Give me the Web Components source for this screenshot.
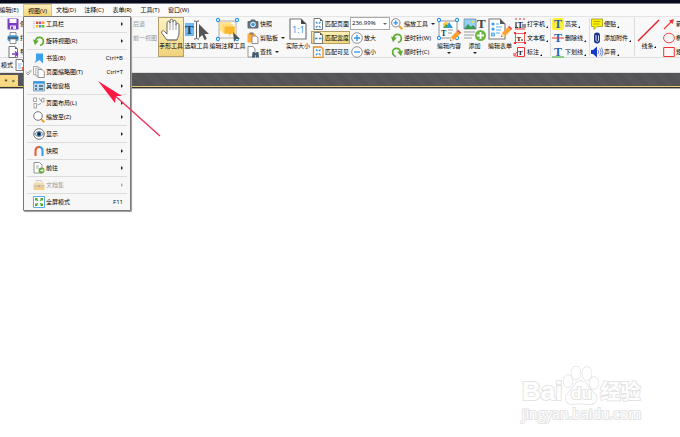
<!DOCTYPE html>
<html lang="zh-CN">
<head>
<meta charset="utf-8">
<title>PDF 编辑器</title>
<style>
html,body{margin:0;height:100%;background:#fff}
body{font:6px/12px "Open Sans","Noto Sans CJK SC",sans-serif;color:#000;overflow:hidden}
</style>
</head>
<body>
<pdf-app></pdf-app>
<script>
const T = (x, y, s, c = '#234') => `<text x="${x}" y="${y}" font-family="Liberation Serif" font-weight="700" font-size="${s}" fill="${c}">T</text>`;
const handles = (w, h) => [[2,2],[w-2,2],[2,h-2],[w-2,h-2]].map(([x,y]) => `<circle cx="${x}" cy="${y}" r="1.6" fill="#fff" stroke="#2196f3" stroke-width="1.1"/>`).join('');
const pencil = (x, y, s = 1) => `<g transform="translate(${x} ${y}) scale(${s})"><path d="M0 11l1-4 6-6 3 3-6 6z" fill="#ff9f2e"/><path d="M7 1l1.200-1.200 3 3L10 4z" fill="#e8453c"/><path d="M0 11l1-4 3 3z" fill="#ffe0b0"/><path d="M0 11l.4-1.600 1.200 1.200z" fill="#444"/></g>`;
const page = `<path d="M2 .5h6L10.500 3v8.500H2z" fill="#fff" stroke="#777"/><path d="M8 .5V3h2.500z" fill="#555"/>`;
const ICONS = {
  save: [12,12,`<path d="M.5.500h10l1 1v10H.5z" fill="#7a3fc0"/><path d="M2.500 1h7v4h-7z" fill="#fff"/><path d="M3 7.500h6V11H3z" fill="#e8ddf6"/><path d="M4 8.500h2V11H4z" fill="#7a3fc0"/>`],
  print: [12,12,`<path d="M3 .5h6V4H3z" fill="#fff" stroke="#777" stroke-width=".8"/><rect x=".5" y="3.500" width="11" height="5.500" rx="1.500" fill="#3c9be0"/><path d="M1 6h10" stroke="#456" stroke-width="1.500"/><path d="M3 7h6v4.500H3z" fill="#fff" stroke="#777" stroke-width=".8"/>`],
  export: [12,12,`${page}<path d="M5 8h5M8 5.500L10.700 8 8 10.500" fill="none" stroke="#7a3fc0" stroke-width="1.400"/>`],
  doc: [12,12,`${page}<path d="M4 5h4M4 7h3M4 9h4" stroke="#8bc2ec"/><path d="M8 8h4v3H8z" fill="#ed6548"/>`],
  hand: [22,24,`<path d="M7 22L2 15.500c-1.400-2 1-3.800 2.600-2L7 16V5c0-2.300 3-2.300 3 0V3c0-2.400 3-2.400 3 0v1c0-2.300 3-2.300 3 0v3c0-2.200 3-2.200 3 0v8c0 4-2 5-2 7z" fill="#fff" stroke="#555" stroke-width=".9"/><path d="M10 5v7M13 4v8M16 7v5M7 22h10" stroke="#777" stroke-width=".7"/>`],
  select: [24,24,`<path d="M0 5h9v13H0z" fill="#6cb9f5"/>${T(0,16,13,'#28465d')}<path d="M9 3h1.500l1 1 1-1H14M11.500 4v16M9 21h1.500l1-1 1 1H14" fill="none" stroke="#444" stroke-width=".9"/><path d="M14 6v14l3.200-3 2.300 5 2.300-1-2.300-5H24z" fill="#555"/>`],
  annot: [24,24,`<path d="M3 3h17v17H3z" fill="none" stroke="#999" stroke-width=".8"/><path d="M4 4h11v9H4z" fill="#ffe08a"/><path d="M6 6h11v9H6z" fill="#ffd05a" stroke="#fff3c4" stroke-width=".6"/><path d="M8 8h11v8h-4l-2 3v-3H8z" fill="#f9b82c" stroke="#fff3c4" stroke-width=".6"/><g>${handles(23,23)}</g><path d="M17 14l1 10 2-3 4 0z" fill="#555"/>`],
  camera: [12,12,`<rect x=".5" y="3" width="11" height="7.500" rx="1" fill="#626c75"/><path d="M4 1.500h4l1 2H3z" fill="#626c75"/><circle cx="6" cy="6.500" r="2.800" fill="#d8effe"/><circle cx="6" cy="6.500" r="1.700" fill="#3498db"/>`],
  paste: [12,12,`<rect x=".5" y="1.500" width="8" height="9" rx="1" fill="#ffaa3d"/><path d="M2.500.500h4v2h-4z" fill="#777"/><path d="M5 4h4l2 2v5.500H5z" fill="#fff" stroke="#777" stroke-width=".8"/>`],
  find: [12,12,`<path d="M1 .5h5L8 3v8H1z" fill="#fff" stroke="#888" stroke-width=".9"/><path d="M5.500 6h2l.5 1h1l.5-1h2l.5 5.500H9V9h-.8v2.500H5z" fill="#435d73"/>`],
  actual: [18,22,`<path d="M1 1h11l5 5v15H1z" fill="#fff" stroke="#777" stroke-width="1.200"/><path d="M12 1v5h5z" fill="#444"/><text x="3" y="14.500" font-family="Open Sans" font-size="9" fill="#1c8ee8">1:1</text>`],
  fitpage: [12,12,`${page}<path d="M4 4l1.500 1.500M8.500 4L7 5.500M4 9.500L5.500 8M8.500 9.500L7 8" stroke="#1c8ee8" stroke-width="1.200"/>`],
  fitwidth: [12,12,`${page}<path d="M3 6.500h2.500M7 6.500h2.500" stroke="#1c8ee8" stroke-width="1.700"/>`],
  fitvisible: [12,12,`<path d="M1.500 1h7.500l2 2v8.500H1.500z" fill="#fff" stroke="#e78b27" stroke-width="1.300"/><path d="M4 3.500L5.500 5M8.500 3.500L7 5M4 9l1.500-1.500M8.500 9L7 7.500" stroke="#1c8ee8" stroke-width="1.200"/>`],
  plus: [12,12,`<circle cx="6" cy="6" r="5.300" fill="#fff" stroke="#777" stroke-width=".8"/><path d="M3 6h6M6 3v6" stroke="#2196f3" stroke-width="1.300"/>`],
  minus: [12,12,`<circle cx="6" cy="6" r="5.300" fill="#fff" stroke="#777" stroke-width=".8"/><path d="M3 6h6" stroke="#2196f3" stroke-width="1.300"/>`],
  zoomtool: [12,12,`<path d="M8 8l3.300 3.300" stroke="#f9a11b" stroke-width="2"/><circle cx="4.800" cy="4.800" r="4.200" fill="#fff" stroke="#778" stroke-width=".9"/><path d="M2.500 4.800h4.600M4.800 2.500v4.600" stroke="#2196f3" stroke-width="1.200"/>`],
  zoom: [12,12,`<path d="M8 8l3.300 3.300" stroke="#f9a11b" stroke-width="2"/><circle cx="5" cy="5" r="4.300" fill="#fff" stroke="#667" stroke-width=".9"/>`],
  ccw: [12,12,`<path d="M2.600 6.500C2.800 1 10.500.800 10.400 6.500 10.300 8.500 9 10 7 10.500" fill="none" stroke="#62ae35" stroke-width="1.700"/><path d="M0 4.500l5.800 1.300-3.800 4.400z" fill="#62ae35"/>`],
  cw: [12,12,`<path d="M9.400 6.500C9.200 1 1.500.800 1.600 6.500 1.700 8.500 3 10 5 10.500" fill="none" stroke="#62ae35" stroke-width="1.700"/><path d="M12 4.500L6.200 5.800l3.800 4.400z" fill="#62ae35"/>`],
  editcontent: [24,24,`<path d="M2 3h18v17H2z" fill="#fff" stroke="#888" stroke-width=".9"/><circle cx="9" cy="7" r="3" fill="#ffc93c"/><path d="M6 10l3-4 4 4z" fill="#52a84b"/><path d="M12 4l4 6H9z" fill="#2f9ae0"/>${T(4,18,8)}<path d="M11 12h5M11 15h4" stroke="#999"/>${handles(22,22)}${pencil(13,12)}`],
  add: [24,24,`<path d="M1 1h12v10H1z" fill="#8fd1f7" stroke="#789" stroke-width=".8"/><path d="M1 11l4-5 3 3 2-2 3 3v1z" fill="#3f9851"/><circle cx="10" cy="4" r="1.300" fill="#ffd84d"/>${T(14,10,13,'#444')}<path d="M1 14h11M1 17h10M1 20h8" stroke="#999" stroke-width="1.200"/><circle cx="17.500" cy="17.500" r="5.500" fill="#66b63b"/><path d="M14 17.500h7M17.500 14v7" stroke="#fff" stroke-width="1.800"/>`],
  form: [24,24,`<path d="M1 1h11l5 5v15H1z" fill="#fff" stroke="#777" stroke-width="1.100"/><path d="M12 1v5h5z" fill="#555"/><circle cx="5" cy="6" r="1.600" fill="#399ee8"/><circle cx="5" cy="11" r="1.600" fill="#399ee8"/><path d="M3.500 15h3v3h-3zM8 6h3M8 9h6M8 12h5M8 15h4" fill="#9bcff4" stroke="#5badec"/>${pencil(13,8)}`],
  typewriter: [12,12,`<path d="M1 1h2M5 1h2M9 1h2M1 11h10" stroke="#e33" stroke-width="1.200"/><path d="M2 4v6M1 9.500h3" stroke="#333" stroke-width="1.200"/>${T(3.500,9.500,8,'#222')}<path d="M9 6v4M11 6v4" stroke="#333"/>`],
  textbox: [12,12,`<path d="M1.500 1.500h9v9h-9z" fill="#fff" stroke="#e33" stroke-width=".8"/><path d="M0 0h2v2H0zM10 0h2v2h-2zM0 10h2v2H0zM10 10h2v2h-2z" fill="#e33"/>${T(2.500,8.500,7,'#111')}<path d="M7 8h2" stroke="#222"/>`],
  callout: [12,12,`<path d="M3.500 1.500h7v9h-7zM3 6L.8 9M0 7v3h3" fill="none" stroke="#e33"/>${T(4,8.500,7,'#111')}`],
  highlight: [12,12,`<rect width="12" height="12" rx="2" fill="#ffef3c"/>${T(2,10,12,'#2265b2')}`],
  strike: [12,12,`${T(2,10,12,'#2265b2')}<path d="M0 6h12" stroke="#e33"/>`],
  underline: [12,12,`${T(2,9.500,12,'#2265b2')}<path d="M0 11h12" stroke="#4fc050" stroke-width="1.300"/>`],
  note: [12,12,`<path d="M1 1h10.500v7.500H6L3 11.500v-3H.5V1z" fill="#fff200" stroke="#999a22" stroke-width=".8"/><path d="M2.500 3.500h7M2.500 6h6" stroke="#999a22" stroke-width=".8"/>`],
  clip: [12,12,`<rect x="3" y=".5" width="6" height="11" rx="3" fill="#19328a"/><path d="M5 3v5c0 2 2.500 2 2.500 0V3.500" fill="none" stroke="#d6ddff"/>`],
  sound: [12,12,`<path d="M0 4h2l4-3.500v11L2 8H0z" fill="#1838c6"/><path d="M7 4q1.500 2 0 4M8.800 2.500q2.700 3.500 0 7M10.500 1.500q3 4.500 0 9" fill="none" stroke="#5369c8" stroke-width=".8"/>`],
  line: [24,24,`<path d="M1 23L22 2" stroke="#e51c23" stroke-width="1.400"/>`],
  arrow: [12,12,`<path d="M1 11L9 3" stroke="#e33" stroke-width="1.100"/><path d="M11 1L9.500 6 6 2.500z" fill="#e33"/>`],
  ellipse: [12,12,`<ellipse cx="6" cy="6" rx="5.400" ry="4.800" fill="none" stroke="#e33" stroke-width=".9"/>`],
  rect: [12,12,`<path d="M.7 1.500h10.600v9H.7z" fill="none" stroke="#e33"/>`],
  toolbar: [12,12,`<path d="M1 3v7" stroke="#aaa" stroke-dasharray="1 1"/><path d="M3 3.500h2.400V6H3z" fill="#e84b3c"/><path d="M6 3.500h2.400V6H6z" fill="#9b59b6"/><path d="M9 3.500h2.400V6H9z" fill="#ff9b24"/><path d="M3 7h2.400v2.500H3z" fill="#ffb52e"/><path d="M6 7h2.400v2.500H6z" fill="#3498db"/><path d="M9 7h2.400v2.500H9z" fill="#66b63b"/>`],
  bookmark: [12,12,`<path d="M3 1.500h7v10L6.500 8 1.500 11 3 8z" fill="#3aa0ec"/>`],
  pages: [12,12,`<path d="M.5.500h4.500L7 2.500v6H.5z" fill="#fff" stroke="#999" stroke-width=".8"/><path d="M2.800 2h4.500l2 2v6H2.800z" fill="#fff" stroke="#999" stroke-width=".8"/><path d="M5 3.500h4l2.300 2.300v5.700H5z" fill="#fff" stroke="#777" stroke-width=".8"/>`],
  panes: [12,12,`<path d="M.5 1.500h11v9.500H.5z" fill="#b9dcf4" stroke="#679cc0" stroke-width=".8"/><path d="M.5 1.500h11v2H.5z" fill="#3498db"/><path d="M2 5h2v2H2zM2 8h2v2H2zM6 5h4v2H6zM6 8h4v2H6z" fill="#667c8e"/>`],
  layout: [12,12,`<path d="M.5 1h3v3.500h-3zM1 6.500h2.500V11H1zM6 1l2 3M11 1L8.500 2v3H11zM4.500 8L8 6.500" fill="#fff" stroke="#999" stroke-width=".9"/>`],
  eye: [12,12,`<circle cx="6" cy="6" r="5.300" fill="#fff" stroke="#555" stroke-width=".8"/><path d="M1.500 6q4.500-5 9 0-4.500 5-9 0z" fill="#cfe9fb" stroke="#456" stroke-width=".7"/><circle cx="6" cy="6" r="2.200" fill="#1d5d8d"/><circle cx="6" cy="6" r="1" fill="#111"/>`],
  magnet: [12,12,`<path d="M6 2Q2.500 2 2.500 6v5" fill="none" stroke="#ed593b" stroke-width="2"/><path d="M6 2q3.500 0 3.500 4v5" fill="none" stroke="#349be6" stroke-width="2"/>`],
  goto: [12,12,`<path d="M1 .5h5.500L9 3v8H1z" fill="#fff" stroke="#888" stroke-width=".9"/><path d="M3 4h3M3 6h3" stroke="#aaa"/><circle cx="8.500" cy="8.500" r="3" fill="#65ad36"/><path d="M7 8.500h3M8.700 7l1.500 1.500L8.700 10" fill="none" stroke="#fff" stroke-width=".8"/>`],
  box: [12,12,`<path d="M3.500 3V1.500h5V3" fill="none" stroke="#bbb"/><path d="M1 3.500h10v3H1z" fill="#f5d28e"/><path d="M.5 6h11v5H.5z" fill="#f0bd68"/><path d="M.5 7h11" stroke="#aaa"/><path d="M5 6h2v2H5z" fill="#999"/>`],
  full: [12,12,`<path d="M.5.500h11v11H.5z" fill="#fff" stroke="#57afe9"/><path d="M2 2h3L4 3l1.300 1.300-1 1L3 4 2 5zM10 2v3L9 4 7.700 5.300l-1-1L8 3 7 2zM2 10V7l1 1 1.300-1.300 1 1L4 9l1 1zM10 10H7l1-1-1.300-1.300 1-1L9 8l1-1z" fill="#55a630"/>`]
};

function define(name, html, setup) {
  const tpl = document.createElement('template');
  tpl.innerHTML = html;
  customElements.define(name, class extends HTMLElement {
    connectedCallback() {
      if (this.shadowRoot) return;
      const root = this.attachShadow({mode: 'open'});
      root.append(tpl.content.cloneNode(true));
      if (setup) setup(this, root);
    }
  });
}
const reset = `*{box-sizing:border-box}button{font:inherit;color:inherit;background:none;border:0;padding:0;margin:0;text-align:left;white-space:nowrap}`;

customElements.define('ui-icon', class extends HTMLElement {
  static observedAttributes = ['name'];
  constructor() {
    super();
    this.attachShadow({mode: 'open'});
  }
  attributeChangedCallback(attr, old, name) {
    const icon = ICONS[name];
    if (!icon) return;
    const [w, h, art] = icon;
    this.shadowRoot.innerHTML = `<style>:host{display:block;flex:none}svg{display:block;overflow:visible}</style><svg width="${w}" height="${h}" viewBox="0 0 ${w} ${h}" aria-hidden="true">${art}</svg>`;
  }
});

define('menu-tab', `<style>${reset}:host{display:block;position:relative;flex:none}
button{display:block;min-width:28px;height:12px;padding:0 4px;text-align:center;line-height:11px}
:host([open]) button{min-width:29px;background:linear-gradient(#fdf0c0,#f5d678);border:1px solid #dcc27a;border-bottom:0;padding:0 3px;line-height:10px}</style>
<button type="button"><slot></slot></button><slot name="menu"></slot>`);

define('drop-menu', `<style>:host{display:block;position:absolute;z-index:5;top:100%;left:0;width:108px;box-sizing:border-box;background:#f7f7f7;border:1px solid #777;border-radius:1px;padding-bottom:1px;box-shadow:1px 1px 1px #999}</style><slot></slot>`);

define('menu-line', `<style>:host{display:block;height:3px;padding:1px 3px;box-sizing:border-box}hr{border:0;height:1px;margin:0;background:#dcdcdc}</style><hr>`);

define('menu-row', `<style>${reset}:host{display:block}
button{width:100%;height:14px;display:grid;grid-template-columns:8px 12px 1fr auto;column-gap:1px;align-items:center;padding:0 7px 0 0;line-height:12px}
.arrow{width:0;height:0;border:2px solid transparent;border-left-color:#222;border-right:0}
svg{display:block}:host([off]){color:#999}:host([off]) .arrow{border-left-color:#aaa}:host([off]) ui-icon{opacity:.7}</style>
<button type="button"><span class="c"></span><ui-icon></ui-icon><span class="t"><slot></slot></span><span class="k"></span></button>`, (host, root) => {
  root.querySelector('ui-icon').setAttribute('name', host.getAttribute('icon'));
  const k = root.querySelector('.k');
  if (host.hasAttribute('key')) k.textContent = host.getAttribute('key'); else k.className = 'arrow';
  if (host.hasAttribute('checked')) root.querySelector('.c').innerHTML = '<svg width="8" height="7" viewBox="-1 0 8 7"><path d="M1 4l2 2 3.500-4.500M1 2.500l2 1.500L5.500 1" fill="none" stroke="#999" stroke-width=".8"/></svg>';
  root.querySelector('button').disabled = host.hasAttribute('off');
});

define('tool-row', `<style>${reset}:host{display:block}
button{display:flex;align-items:center;gap:1px;width:100%;height:13px;border:1px solid transparent}
:host([on]) button{background:linear-gradient(#fdefb4,#f4d67c);border-color:#b5a064}
:host([off]){color:#999}.d{width:0;height:0;border:2px solid transparent;border-top-color:#222;border-bottom:0;margin-left:2px}
.m{width:0;height:0;border-left:2px solid transparent;border-bottom:2px solid #111;align-self:flex-end;margin-bottom:1px}</style>
<button type="button"><span><slot></slot></span></button>`, (host, root) => {
  const b = root.querySelector('button'), name = host.getAttribute('icon');
  if (name) { const i = document.createElement('ui-icon'); i.setAttribute('name', name); b.prepend(i); }
  for (const [attr, cls] of [['drop','d'],['more','m']]) if (host.hasAttribute(attr)) { const s = document.createElement('span'); s.className = cls; b.append(s); }
});

define('tool-big', `<style>${reset}:host{display:block;flex:none}
button{width:100%;height:40px;display:flex;flex-direction:column;align-items:center;border:1px solid transparent}
ui-icon{height:24px}span{line-height:8px}
:host([on]) button{background:linear-gradient(#fdf1c2,#f1d27a);border-color:#b3a06b}
.d{width:0;height:0;border:2px solid transparent;border-top-color:#222;border-bottom:0;margin-top:2px}
.m::after{content:"";display:inline-block;border-left:2px solid transparent;border-bottom:2px solid #111}</style>
<button type="button"><ui-icon></ui-icon><span><slot></slot></span></button>`, (host, root) => {
  root.querySelector('ui-icon').setAttribute('name', host.getAttribute('icon'));
  if (host.hasAttribute('more')) root.querySelector('span').className = 'm';
  if (host.hasAttribute('drop')) { const s = document.createElement('i'); s.className = 'd'; root.querySelector('button').append(s); }
});

define('tool-column', `<style>:host{display:flex;flex-direction:column;gap:1px;flex:none}</style><slot></slot>`);

define('zoom-box', `<style>${reset}:host{display:block;position:relative}
select{appearance:none;display:block;width:100%;height:13px;font:inherit;line-height:11px;color:#000;background:#fff;border:1px solid #aaa;border-radius:0;padding:0 1px}
i{position:absolute;right:3px;top:6px;border:2px solid transparent;border-top-color:#666;border-bottom:0;pointer-events:none}</style>
<select aria-label="缩放比例"><option>236.99%</option></select><i></i>`);

define('tool-ribbon', `<style>:host{display:flex;flex:none;height:42px;box-sizing:border-box;background:#f8f8f8;border-top:1px solid #e4e4e4;border-bottom:1px solid #dedede}
.sep{flex:none;width:1px;margin:1px 0;background:#dcdcdc}
.nav{padding-left:87px}</style>
<tool-column style="width:39px;padding-left:6px"><tool-row icon="save">保存</tool-row><tool-row icon="print">打印</tool-row><tool-row icon="export">导出</tool-row></tool-column>
<tool-column class="nav" style="width:26px"><tool-row off>后退</tool-row><tool-row off>前一视图</tool-row></tool-column>
<tool-big on icon="hand" style="width:26px">手形工具</tool-big>
<tool-big icon="select" style="width:25px">选取工具</tool-big>
<tool-big icon="annot" style="width:37px">编辑注释工具</tool-big>
<tool-column style="width:39px"><tool-row icon="camera">快照</tool-row><tool-row icon="paste" drop>剪贴板</tool-row><tool-row icon="find" drop>查找</tool-row></tool-column>
<tool-big icon="actual" style="width:26px">实际大小</tool-big>
<tool-column style="width:39px"><tool-row icon="fitpage">匹配页面</tool-row><tool-row on icon="fitwidth">匹配宽度</tool-row><tool-row icon="fitvisible">匹配可见</tool-row></tool-column>
<tool-column style="width:40px"><zoom-box></zoom-box><tool-row icon="plus">放大</tool-row><tool-row icon="minus">缩小</tool-row></tool-column>
<tool-column style="width:46px"><tool-row icon="zoomtool" drop>缩放工具</tool-row><tool-row icon="ccw">逆时针(W)</tool-row><tool-row icon="cw">顺时针(C)</tool-row></tool-column>
<tool-big drop icon="editcontent" style="width:26px">编辑内容</tool-big>
<tool-big drop icon="add" style="width:25px">添加</tool-big>
<tool-big icon="form" style="width:26px">编辑表单</tool-big>
<tool-column style="width:37px"><tool-row more icon="typewriter">打字机</tool-row><tool-row more icon="textbox">文本框</tool-row><tool-row more icon="callout">标注</tool-row></tool-column>
<div class="sep"></div>
<tool-column style="width:38px"><tool-row more icon="highlight">高亮</tool-row><tool-row more icon="strike">删除线</tool-row><tool-row more icon="underline">下划线</tool-row></tool-column>
<div class="sep"></div>
<tool-column style="width:44px"><tool-row more icon="note">便贴</tool-row><tool-row more icon="clip">添加附件</tool-row><tool-row more icon="sound">声音</tool-row></tool-column>
<div class="sep"></div>
<tool-big more icon="line" style="width:27px">线条</tool-big>
<tool-column style="width:44px"><tool-row icon="arrow">箭头</tool-row><tool-row icon="ellipse">椭圆</tool-row><tool-row icon="rect">矩形</tool-row></tool-column>`);

define('site-mark', `<style>:host{display:block;position:absolute;right:37px;bottom:14px;width:121px;color:#fff;font:700 26px/28px "Liberation Sans","Noto Sans CJK SC",sans-serif;-webkit-text-stroke:2px #e4e4e4;paint-order:stroke fill;white-space:nowrap}
.a{display:flex;align-items:flex-end;height:40px}.paw{position:relative;width:38px;height:40px}
.paw svg{display:block}.paw b{position:absolute;left:0;right:0;bottom:2px;text-align:center;font-size:17px;line-height:18px}
.e{font-size:20px;line-height:26px}.u{font:14px/18px "Open Sans",sans-serif}</style>
<div class="a"><span>Bai</span><span class="paw"><svg width="38" height="40" viewBox="0 0 38 40" fill="#fff" stroke="#e0e0e0" stroke-width="1.300"><ellipse cx="6" cy="16" rx="4.500" ry="6"/><ellipse cx="14" cy="8" rx="4.600" ry="6.600"/><ellipse cx="25" cy="8.500" rx="4.600" ry="6.600"/><ellipse cx="32" cy="18" rx="4.500" ry="6"/><path d="M19 16c-6 0-7 7-12 11-7 6-2 13 5 12q7-1 14 0c8 1 12-6 5-12-5-4-6-11-12-11z"/></svg><b>du</b></span><span class="e">经验</span></div><div class="u">jingyan.baidu.com</div>`);

define('pdf-app', `<style>${reset}
:host{display:flex;flex-direction:column;position:relative;height:100vh;overflow:hidden}
.title{flex:none;height:4px;background:linear-gradient(#080b1c 3px,#777a84 3px)}
nav{display:flex;flex:none;height:12px;padding-left:23px;background:#fbfbfb}
nav menu-tab:first-child{margin-left:-28px}
.bar{flex:none;display:flex;align-items:center;height:15px;background:#f7f7f7;border-bottom:1px solid #ddd}
.tabs{flex:none;display:flex;align-items:flex-end;height:13px;background:repeating-linear-gradient(45deg,#505052 0 1px,#5b5b5d 1px 2px)}
.tab{width:18px;height:11px;background:#f7da83;display:flex;align-items:center;justify-content:flex-end;gap:4px;padding-right:3px;line-height:10px}
.rule{flex:none;height:3px;background:linear-gradient(#eacb70 1px,#333 1px 2px,#aaa 2px)}
main{flex:1;background:#fff}
.pointer{position:absolute;z-index:6;left:98px;top:81px}</style>
<div class="title"></div>
<nav><menu-tab>编辑(E)</menu-tab><menu-tab open>视图(V)<drop-menu slot="menu">
<menu-row icon="toolbar">工具栏</menu-row><menu-line></menu-line>
<menu-row icon="ccw">旋转视图(R)</menu-row><menu-line></menu-line>
<menu-row icon="bookmark" key="Ctrl+B">书签(B)</menu-row><menu-row icon="pages" key="Ctrl+T" checked>页面缩略图(T)</menu-row><menu-row icon="panes">其他窗格</menu-row><menu-line></menu-line>
<menu-row icon="layout">页面布局(L)</menu-row><menu-row icon="zoom">缩放至(Z)</menu-row><menu-line></menu-line>
<menu-row icon="eye">显示</menu-row><menu-line></menu-line>
<menu-row icon="magnet">快照</menu-row><menu-line></menu-line>
<menu-row icon="goto">前往</menu-row><menu-line></menu-line>
<menu-row icon="box" off>文档集</menu-row><menu-line></menu-line>
<menu-row icon="full" key="F11">全屏模式</menu-row></drop-menu></menu-tab><menu-tab>文档(D)</menu-tab><menu-tab>注释(C)</menu-tab><menu-tab>表单(R)</menu-tab><menu-tab>工具(T)</menu-tab><menu-tab>窗口(W)</menu-tab></nav>
<tool-ribbon></tool-ribbon>
<div class="bar"><tool-row>模式</tool-row><ui-icon name="doc"></ui-icon></div>
<div class="tabs"><div class="tab"><span>*</span><span>×</span></div></div>
<div class="rule"></div>
<main></main>
<svg class="pointer" width="63" height="56" viewBox="0 0 63 56" aria-hidden="true"><path d="M14 12L62 55" stroke="#f32c55" stroke-width="1.300"/><path d="M0 0L24 15 18 15 17 22z" fill="#ff1744"/></svg>
<site-mark></site-mark>`);
</script>
</body>
</html>
